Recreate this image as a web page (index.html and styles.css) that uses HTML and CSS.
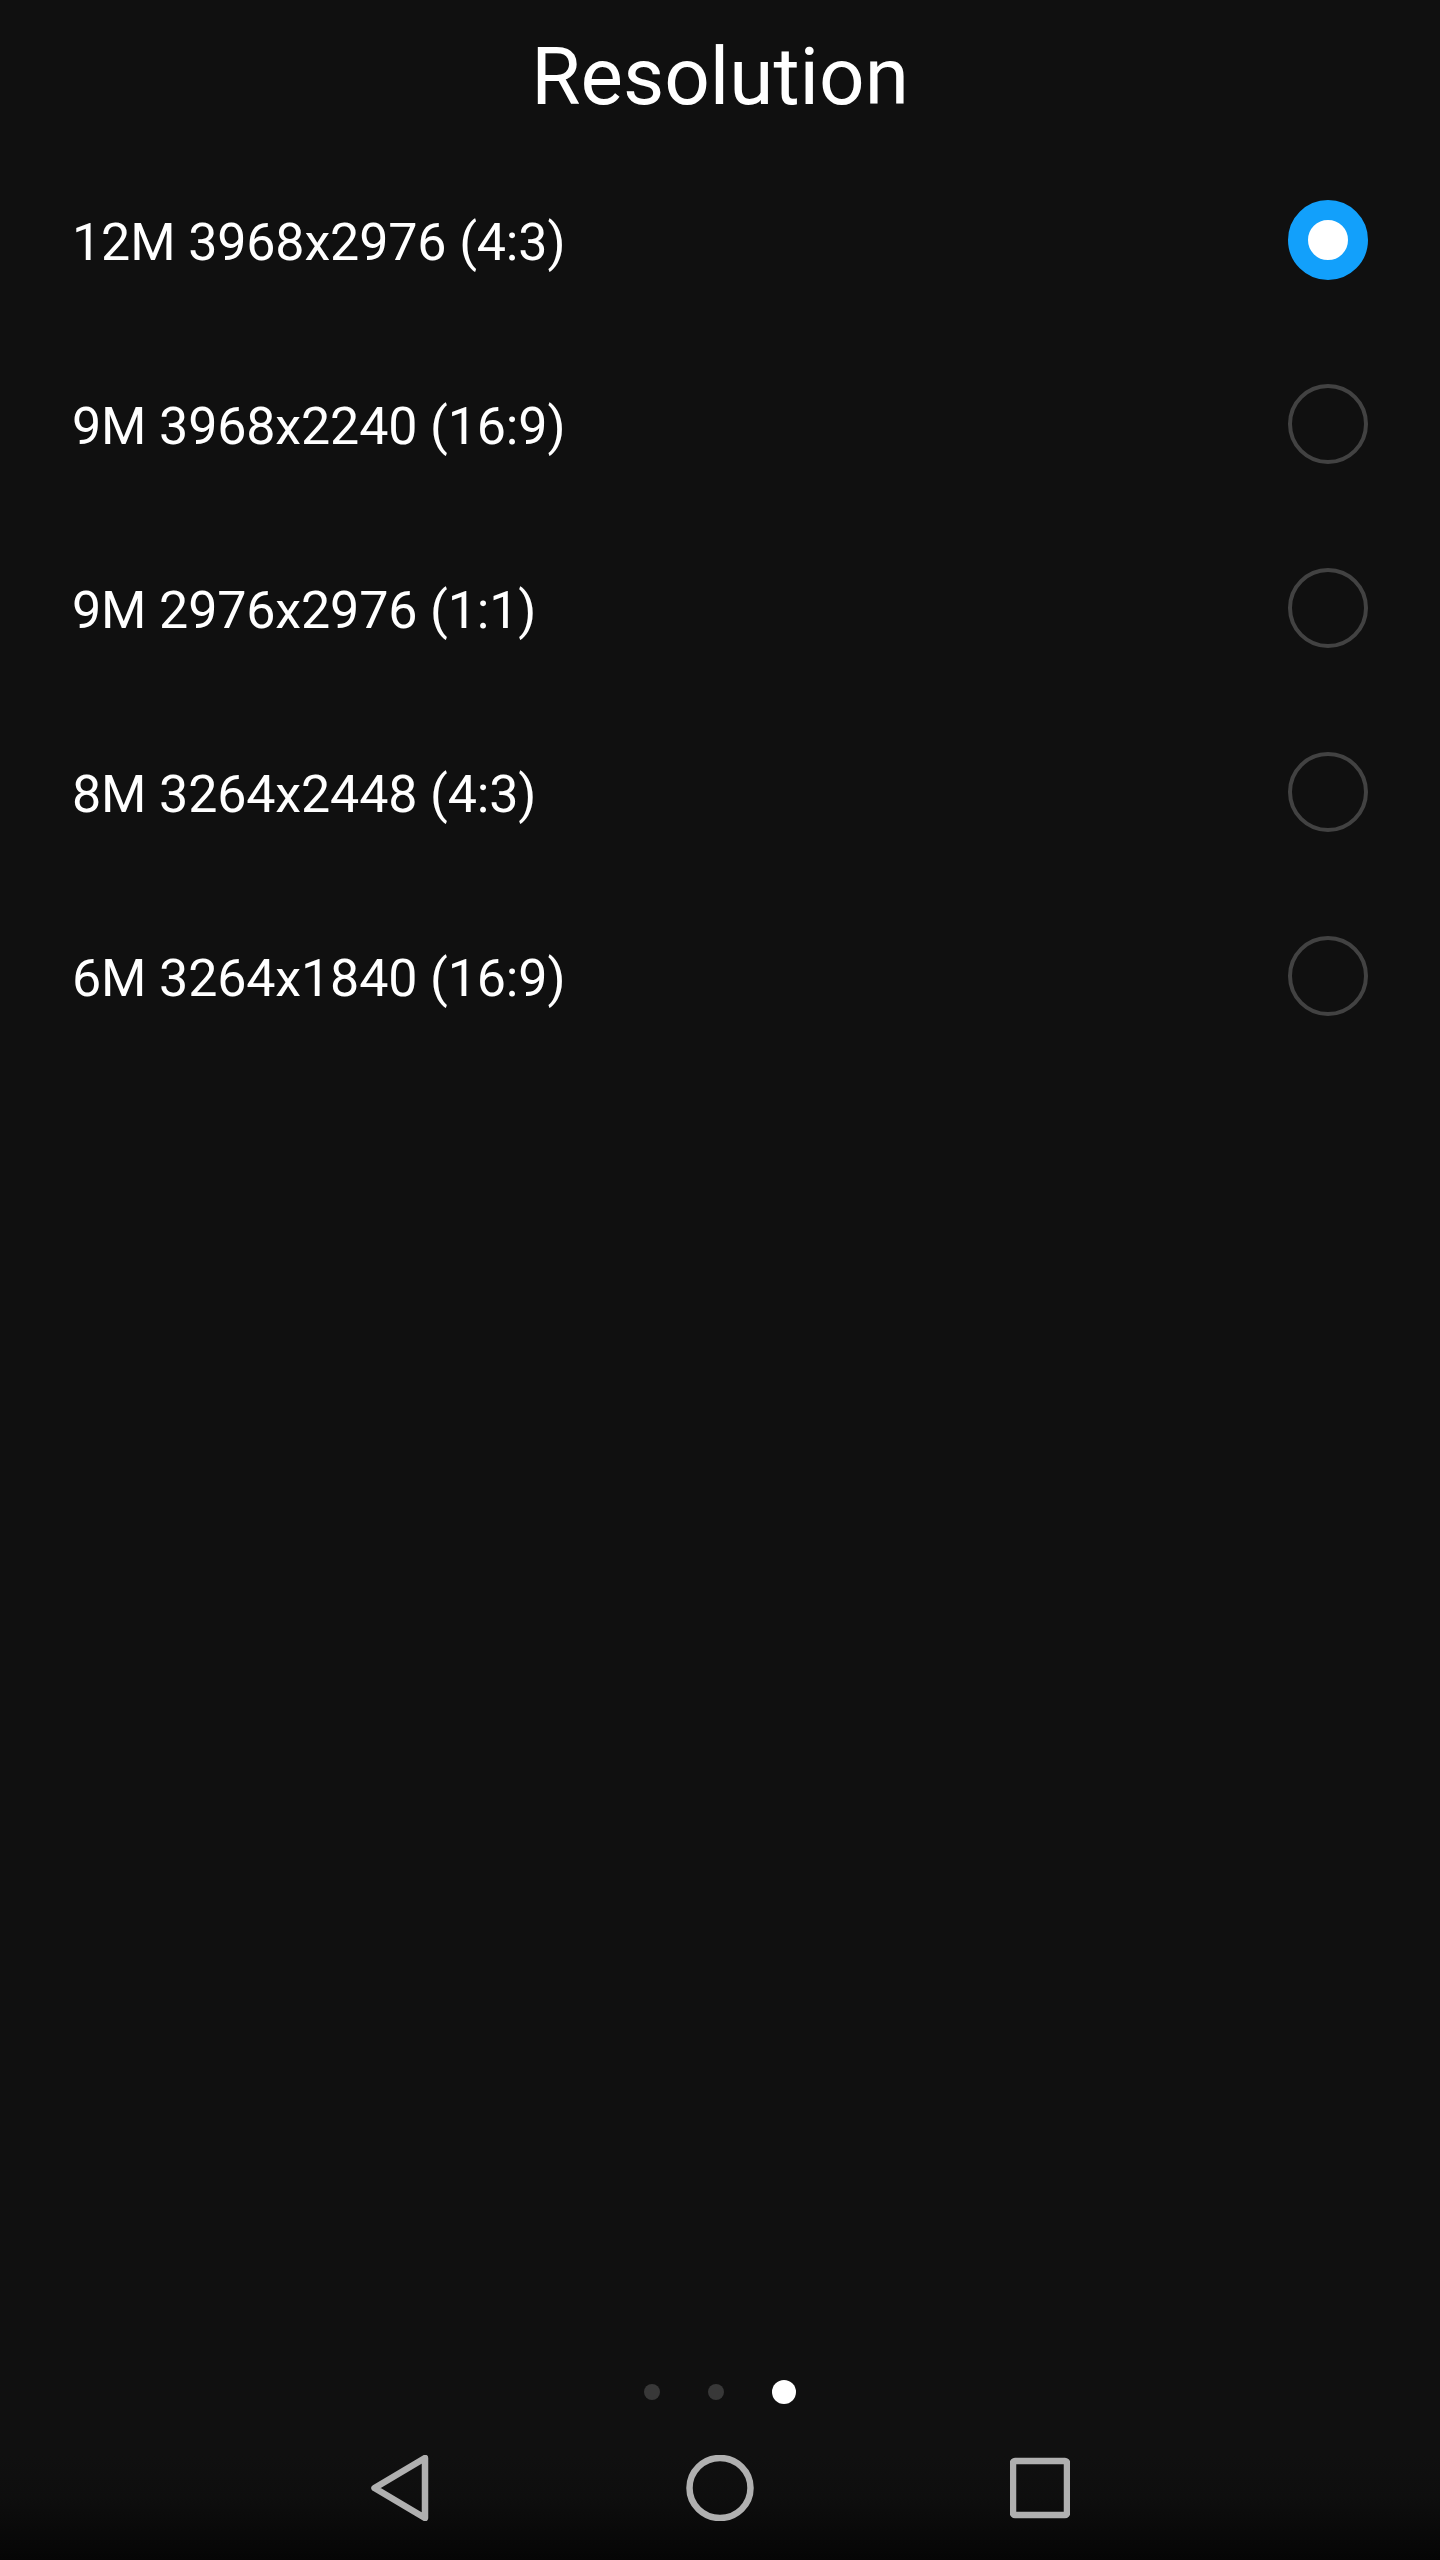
FILE: index.html
```html
<!DOCTYPE html>
<html lang="en">
<head>
  <meta charset="UTF-8" />
  <title>Resolution</title>
  <link rel="stylesheet" href="styles.css">
</head>
<body>
  <h1 class="title">Resolution</h1>

  <!-- Resolution options -->
  <div class="options">
    <div class="option"><span class="label">12M 3968x2976 (4:3)</span><span class="radio selected"></span></div>
    <div class="option"><span class="label">9M 3968x2240 (16:9)</span><span class="radio"></span></div>
    <div class="option"><span class="label">9M 2976x2976 (1:1)</span><span class="radio"></span></div>
    <div class="option"><span class="label">8M 3264x2448 (4:3)</span><span class="radio"></span></div>
    <div class="option"><span class="label">6M 3264x1840 (16:9)</span><span class="radio"></span></div>
  </div>

  <div class="pager">
    <span class="dot"></span>
    <span class="dot"></span>
    <span class="dot active"></span>
  </div>

  <!-- Android navigation bar -->
  <div class="navbar">
    <svg class="nav-icon" width="60" height="66" viewBox="0 0 60 66">
      <path d="M54 3 L3.5 33 L54 63 Z" />
    </svg>
    <svg class="nav-icon" width="68" height="66" viewBox="0 0 68 66">
      <ellipse cx="34" cy="33" rx="30.5" ry="30" />
    </svg>
    <svg class="nav-icon" width="60" height="66" viewBox="0 0 60 66">
      <rect x="3" y="6" width="54" height="54" rx="2" />
    </svg>
  </div>
</body>
</html>
```

FILE: styles.css
```css
body {
  margin: 0;
  height: 2560px;
  display: flex;
  flex-direction: column;
  overflow: hidden;
  background: #101010;
  color: #fff;
  font-family: Roboto, sans-serif;
}

.title {
  margin: 0;
  height: 148px;
  line-height: 155px;
  font-size: 80px;
  font-weight: 400;
  text-align: center;
}

.options {
  flex: 1;
}

.option {
  height: 184px;
  padding: 0 72px;
  display: flex;
  align-items: center;
  justify-content: space-between;
  font-size: 52px;
}

.label {
  padding-top: 4px;
  letter-spacing: -0.15px;
}

.radio {
  width: 80px;
  height: 80px;
  box-sizing: border-box;
  border: 4px solid #424242;
  border-radius: 50%;
}

.radio.selected {
  border: 20px solid #12a0fb;
  background: #fff;
}

.pager {
  height: 24px;
  margin-bottom: 51px;
  display: flex;
  align-items: center;
  padding-left: 644px;
}

.dot {
  width: 16px;
  height: 16px;
  margin-right: 48px;
  border-radius: 50%;
  background: #383838;
}

.dot.active {
  width: 24px;
  height: 24px;
  margin-right: 0;
  background: #fff;
}

.navbar {
  height: 105px;
  background: linear-gradient(#101010, #0e0e0e 40%, #050505);
  display: flex;
  align-items: flex-start;
  padding-left: 371px;
}

.nav-icon {
  display: block;
  fill: none;
  stroke: #b0b0b0;
  stroke-width: 6.5;
  stroke-linejoin: round;
}

.nav-icon:nth-child(1) {
  margin-right: 255px;
}

.nav-icon:nth-child(2) {
  margin-right: 256px;
}
```
